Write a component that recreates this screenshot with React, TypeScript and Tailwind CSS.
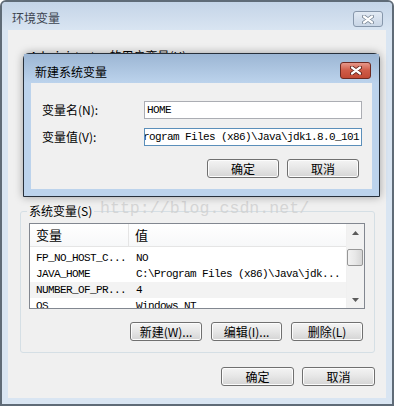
import React from "react";

const cjk = { fontFamily: '"Noto Sans CJK SC", "Noto Sans", sans-serif' };
const mono = { fontFamily: '"Liberation Mono", "DejaVu Sans Mono", monospace' };

const CloseX = ({ dark }: { dark: string }) => (
  <svg width="12" height="9" viewBox="0 0 12 9">
    <path d="M2 1.5 L10 7.5 M10 1.5 L2 7.5" stroke={dark} strokeWidth="4" strokeLinecap="round" />
    <path d="M2 1.5 L10 7.5 M10 1.5 L2 7.5" stroke="#ffffff" strokeWidth="2.2" strokeLinecap="round" />
  </svg>
);

const Btn = ({ label, w = "w-[72px]", h = "h-[19px]" }: { label: string; w?: string; h?: string }) => (
  <div
    className={`${w} ${h} flex items-center justify-center rounded-[3px] border border-[#707070] bg-gradient-to-b from-[#f4f4f4] via-[#e6e6e6] to-[#d4d4d4] text-[12px] leading-none text-black shadow-[inset_0_0_0_1px_#fcfcfc]`}
    style={cjk}
  >
    {label}
  </div>
);

const Triangle = ({ up }: { up?: boolean }) => (
  <svg width="7" height="4" viewBox="0 0 7 4">
    <polygon points={up ? "3.5,0 7,4 0,4" : "0,0 7,0 3.5,4"} fill="#5a5a5a" />
  </svg>
);

const rows = [
  { name: "FP_NO_HOST_C...", value: "NO" },
  { name: "JAVA_HOME", value: "C:\\Program Files (x86)\\Java\\jdk..." },
  { name: "NUMBER_OF_PR...", value: "4", hl: true },
  { name: "OS", value: "Windows_NT" },
];

export default function App() {
  return (
    <div className="relative h-[406px] w-[394px] overflow-hidden rounded-t-[6px] border-2 border-[#5f6b77] bg-[#d9e5f2]">
      {/* outer title bar (inactive) */}
      <div className="flex h-[28px] justify-between bg-gradient-to-b from-[#c4d4e7] to-[#d9e5f2]">
        <div className="pl-[10px] pt-[8px] text-[12px] leading-[16px] text-[#3c4450]" style={cjk}>
          环境变量
        </div>
        <div className="mr-[9px] mt-[9px] flex h-[16px] w-[30px] items-center justify-center rounded-[3px] border border-[#8797ab] bg-gradient-to-b from-[#e2eaf4] to-[#c9d6e6]">
          <CloseX dark="#7a8898" />
        </div>
      </div>

      {/* outer client */}
      <div className="mx-[6px] h-[368px] bg-[#f0f0f0]">
        <div className="pl-[22px] pt-[18px] text-[12px] leading-[16px] text-black" style={cjk}>
          Administrator 的用户变量(U)
        </div>

        <div className="relative ml-[12px] mt-[147px] h-[142px] w-[355px] rounded-[3px] border border-[#d5dfe5] px-[8px] pt-[11px]">
          <div className="absolute -top-[9px] left-[6px] bg-[#f0f0f0] px-[2px] text-[12px] leading-[16px] text-black" style={cjk}>
            系统变量(S)
          </div>
          <div
            className="absolute -top-[13px] left-[79px] text-[16.6px] leading-[20px] text-[#cfcfcf]/80"
            style={mono}
          >
            http://blog.csdn.net/
          </div>

          {/* list view */}
          <div className="flex h-[86px] w-[336px] border border-[#828790] bg-white">
            <div className="w-[316px] overflow-hidden">
              <div className="flex h-[23px] border-b border-[#e5e5e5] bg-gradient-to-b from-white to-[#f7f8f9] text-[13px] text-black" style={cjk}>
                <div className="flex w-[99px] items-center border-r border-[#e5e5e5] pl-[6px]">变量</div>
                <div className="flex items-center pl-[6px]">值</div>
              </div>
              <div className="pt-[3px]">
                {rows.map((r) => (
                  <div
                    key={r.name}
                    className={`flex h-[16px] items-center whitespace-nowrap text-[11px] tracking-[-0.6px] text-black ${r.hl ? "bg-[#f3f3f3]" : ""}`}
                    style={mono}
                  >
                    <div className="w-[100px] pl-[6px]">{r.name}</div>
                    <div className="pl-[6px]">{r.value}</div>
                  </div>
                ))}
              </div>
            </div>
            {/* scrollbar */}
            <div className="flex w-[18px] flex-col border-l border-[#f0f0f0] bg-[#f2f2f2]">
              <div className="flex h-[17px] items-center justify-center pt-[1px]">
                <Triangle up />
              </div>
              <div className="mt-[8px] h-[17px] w-[16px] rounded-[2px] border border-[#979797] bg-gradient-to-r from-[#f2f2f2] via-[#e8e8e8] to-[#d6d6d6]" />
              <div className="flex-1" />
              <div className="flex h-[17px] items-center justify-center">
                <Triangle />
              </div>
            </div>
          </div>

          <div className="mt-[13px] flex justify-end gap-[9px] pr-[3px]">
            <Btn label="新建(W)..." />
            <Btn label="编辑(I)..." w="w-[71px]" />
            <Btn label="删除(L)" />
          </div>
        </div>

        <div className="mt-[14px] flex justify-end gap-[8px] pr-[11px]">
          <Btn label="确定" w="w-[73px]" />
          <Btn label="取消" w="w-[73px]" />
        </div>
      </div>

      {/* inner dialog (active) */}
      <div className="absolute left-[21px] top-[51px] h-[144px] w-[357px] rounded-t-[6px] border border-[#27303b] bg-[#bcd3ec] shadow-[0_0_8px_rgba(0,0,0,0.35)]">
        <div className="flex h-[29px] justify-between bg-gradient-to-b from-[#9cb6d4] to-[#bcd3ec]">
          <div className="pl-[11px] pt-[10px] text-[12px] leading-[16px] text-black" style={cjk}>
            新建系统变量
          </div>
          <div className="mr-[8px] mt-[8px] flex h-[17px] w-[31px] items-center justify-center rounded-[3px] border border-[#6e2a22] bg-gradient-to-b from-[#e6978a] via-[#cf5b47] to-[#c24a35]">
            <CloseX dark="#5b1e16" />
          </div>
        </div>
        <div className="mx-[7px] h-[106px] bg-[#f0f0f0] pl-[11px] pr-[10px] pt-[18px]" style={cjk}>
          <div className="flex h-[18px] items-center">
            <div className="w-[102px] text-[12px] leading-none text-black">变量名(N):</div>
            <div className="flex h-[18px] flex-1 items-center border border-[#abadb3] bg-white pl-[2px] text-[11px] tracking-[-0.6px] text-black" style={mono}>
              HOME
            </div>
          </div>
          <div className="mt-[9px] flex h-[18px] items-center">
            <div className="w-[102px] text-[12px] leading-none text-black">变量值(V):</div>
            <div className="flex h-[18px] flex-1 items-center justify-end overflow-hidden whitespace-nowrap border border-[#5b8fba] bg-white pr-[2px] text-[11px] tracking-[-0.6px] text-black" style={mono}>
              C:\Program Files (x86)\Java\jdk1.8.0_101
            </div>
          </div>
          <div className="mt-[13px] flex justify-end gap-[8px] pr-[3px]">
            <Btn label="确定" />
            <Btn label="取消" />
          </div>
        </div>
      </div>
    </div>
  );
}
